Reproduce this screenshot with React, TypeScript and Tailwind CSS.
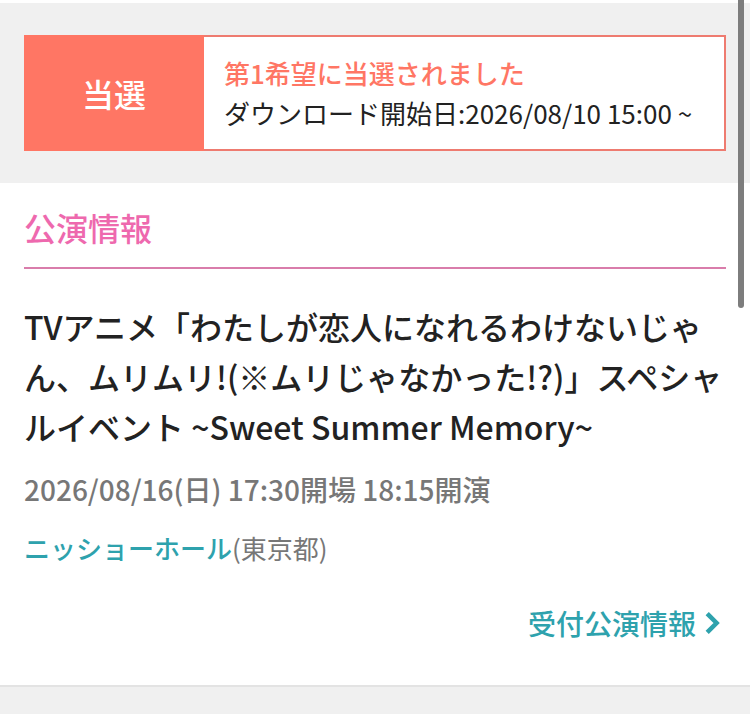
const notice = {
  result: '当選',
  title: '第1希望に当選されました',
  detail: 'ダウンロード開始日:2026/08/10 15:00 ~',
};

const event = {
  title: 'TVアニメ「わたしが恋人になれるわけないじゃん、ムリムリ!(※ムリじゃなかった!?)」スペシャルイベント ~Sweet Summer Memory~',
  date: '2026/08/16(日) 17:30開場 18:15開演',
  venue: 'ニッショーホール',
  area: '(東京都)',
};

export default function App() {
  return (
    <div className="relative min-h-screen bg-[#f0f0f0] font-['Noto_Sans_CJK_JP',sans-serif] text-[#222222]">
      <div className="h-[3px] bg-white" />

      {/* Lottery result */}
      <section className="px-6 py-8">
        <div className="flex border-2 border-[#ee7b70] bg-white">
          <div className="-my-0.5 -ml-0.5 flex w-[180px] shrink-0 items-center justify-center bg-[#ff7664] text-[32px] leading-[40px] font-medium text-white">
            {notice.result}
          </div>
          <div className="min-w-0 flex-1 px-5 py-4 text-[26px] leading-[40px]">
            <p className="font-medium text-[#ff7664]">{notice.title}</p>
            <p>{notice.detail}</p>
          </div>
        </div>
      </section>

      {/* Performance info */}
      <main className="border-b-2 border-[#e3e3e3] bg-white px-6 pt-5 pb-10">
        <h1 className="border-b-2 border-[#d97dab] pb-4 text-[32px] leading-[48px] font-medium text-[#ee69ae]">公演情報</h1>
        <h2 className="mt-8 text-[32px] leading-[50px] font-medium">{event.title}</h2>
        <p className="mt-4 text-[28px] leading-[44px] font-medium text-[#777777]">{event.date}</p>
        <p className="mt-4 text-[26px] leading-[42px] text-[#777777]">
          <a href="#venue" className="font-medium text-[#2ea2ad]">{event.venue}</a>
          {event.area}
        </p>
        <div className="mt-8 flex justify-end">
          <a href="#reception" className="flex items-center gap-2 text-[28px] leading-[44px] font-medium text-[#2ea2ad]">
            受付公演情報
            <svg width="22" height="24" viewBox="0 0 22 24" fill="none" stroke="currentColor" strokeWidth="4.5" aria-hidden="true">
              <path d="M3.2 2.6l9.4 9.4-9.4 9.4" />
            </svg>
          </a>
        </div>
      </main>

      {/* Scroll indicator */}
      <div className="absolute top-0 right-1.5 h-[308px] w-[6px] rounded-b-full bg-[#7d7d7d]" />
    </div>
  );
}
